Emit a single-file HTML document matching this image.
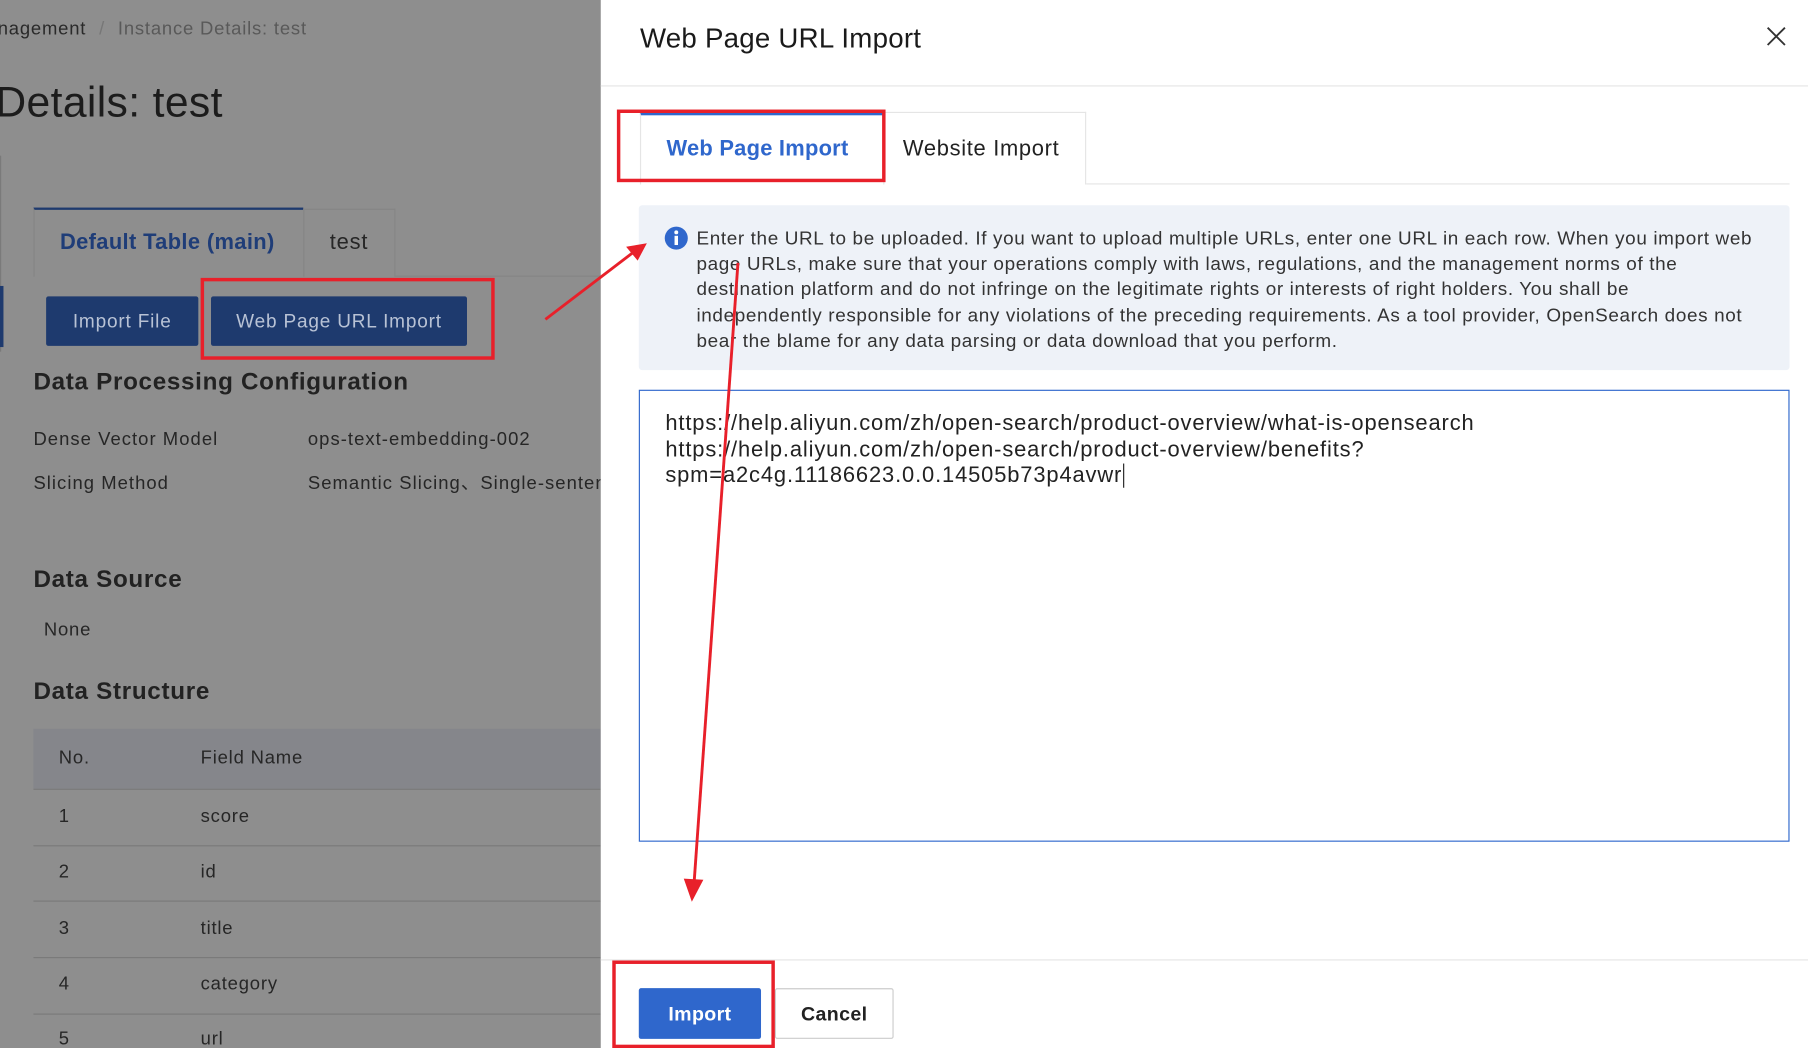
<!DOCTYPE html>
<html><head><meta charset="utf-8"><style>
*{margin:0;padding:0;box-sizing:border-box}
html,body{width:1808px;height:1048px;overflow:hidden;background:#8e8e8e}
#w{position:absolute;left:0;top:0;width:1568px;height:909px;transform:scale(1.15306);transform-origin:0 0;font-family:"Liberation Sans","Noto Sans CJK SC",sans-serif;letter-spacing:0.7px}
.a{position:absolute;white-space:nowrap}
#left{position:absolute;left:0;top:0;width:521px;height:909px;background:#8e8e8e;color:#262626;overflow:hidden}
#modal{position:absolute;left:521px;top:0;width:1047px;height:909px;background:#fff}
.h{font-weight:bold;font-size:21px;color:#222;letter-spacing:0.6px}
.row{position:absolute;left:29px;width:492px;height:1px;background:#7a7a7a}
</style></head><body><div id="w">
<div id="left">
<div class="a" style="left:-2px;top:17px;font-size:16px;color:#2a2a2a">nagement <span style="color:#777;margin:0 6px">/</span> <span style="color:#595959">Instance Details: test</span></div>
<div class="a" style="left:-4px;top:68px;font-size:37px;color:#1c1c1c;letter-spacing:0.3px">Details: test</div>
<div class="a" style="left:0;top:135px;width:1px;height:170px;background:#7a7a7a"></div>
<div class="a" style="left:0;top:248px;width:3px;height:53px;background:#1e3a6e"></div>
<div class="a" style="left:29px;top:180px;width:234px;height:60px;border-top:2px solid #1e3a6e;border-left:1px solid #858585"></div>
<div class="a" style="left:52px;top:200px;font-size:19px;color:#1f3d78;font-weight:bold;letter-spacing:0.3px">Default Table (main)</div>
<div class="a" style="left:263px;top:181px;width:80px;height:59px;border:1px solid #858585;border-bottom:none"></div>
<div class="a" style="left:286px;top:200px;font-size:19px;color:#262626">test</div>
<div class="a" style="left:343px;top:239px;width:178px;height:1px;background:#858585"></div>
<div class="a" style="left:40px;top:257px;width:132px;height:43px;background:#1e3a6e;border-radius:2px;color:#b8c2d5;font-size:16.5px;text-align:center;line-height:45px">Import File</div>
<div class="a" style="left:183px;top:257px;width:222px;height:43px;background:#1e3a6e;border-radius:2px;color:#b8c2d5;font-size:16.5px;text-align:center;line-height:45px">Web Page URL Import</div>
<div class="a" style="left:174px;top:241px;width:255px;height:71px;border:3px solid #e8202a"></div>
<div class="a h" style="left:29px;top:320px">Data Processing Configuration</div>
<div class="a" style="left:29px;top:373px;font-size:16px;letter-spacing:0.9px">Dense Vector Model</div>
<div class="a" style="left:267px;top:373px;font-size:16px;letter-spacing:0.9px">ops-text-embedding-002</div>
<div class="a" style="left:29px;top:411px;font-size:16px;letter-spacing:0.9px">Slicing Method</div>
<div class="a" style="left:267px;top:411px;font-size:16px;letter-spacing:0.9px;line-height:18px">Semantic Slicing、Single-sentence</div>
<div class="a h" style="left:29px;top:491px">Data Source</div>
<div class="a" style="left:38px;top:538px;font-size:16px">None</div>
<div class="a h" style="left:29px;top:588px">Data Structure</div>
<div class="a" style="left:29px;top:632px;width:492px;height:52px;background:#85868b"></div>
<div class="a" style="left:51px;top:649px;font-size:16px">No.</div>
<div class="a" style="left:174px;top:649px;font-size:16px">Field Name</div>
<div class="row" style="top:684px"></div><div class="row" style="top:733px"></div><div class="row" style="top:781px"></div><div class="row" style="top:830px"></div><div class="row" style="top:879px"></div>
<div class="a" style="left:51px;top:700px;font-size:16px">1</div><div class="a" style="left:174px;top:700px;font-size:16px">score</div>
<div class="a" style="left:51px;top:748px;font-size:16px">2</div><div class="a" style="left:174px;top:748px;font-size:16px">id</div>
<div class="a" style="left:51px;top:797px;font-size:16px">3</div><div class="a" style="left:174px;top:797px;font-size:16px">title</div>
<div class="a" style="left:51px;top:845px;font-size:16px">4</div><div class="a" style="left:174px;top:845px;font-size:16px">category</div>
<div class="a" style="left:51px;top:893px;font-size:16px">5</div><div class="a" style="left:174px;top:893px;font-size:16px">url</div>
</div>
<div id="modal">
<div class="a" style="left:34px;top:20px;font-size:24px;color:#1a1a1a;letter-spacing:0.2px">Web Page URL Import</div>
<svg class="a" style="left:1011px;top:23px" width="17" height="17"><path d="M1 1L16 16M16 1L1 16" stroke="#333" stroke-width="1.6"/></svg>
<div class="a" style="left:0;top:74px;width:1047px;height:1px;background:#e5e5e5"></div>
<div class="a" style="left:34px;top:97px;width:211px;height:63px;border-top:3px solid #2f67cc;border-left:1px solid #e5e5e5;background:#fff"></div>
<div class="a" style="left:57px;top:119px;font-size:19px;color:#2f67cc;font-weight:bold;letter-spacing:0.2px">Web Page Import</div>
<div class="a" style="left:245px;top:97px;width:176px;height:63px;border:1px solid #e5e5e5;border-bottom:none"></div>
<div class="a" style="left:262px;top:119px;font-size:19px;color:#222;letter-spacing:0.6px">Website Import</div>
<div class="a" style="left:421px;top:159px;width:610px;height:1px;background:#e5e5e5"></div>
<div class="a" style="left:14px;top:95px;width:233px;height:63px;border:3px solid #e8202a"></div>
<div class="a" style="left:33px;top:178px;width:998px;height:143px;background:#eef2f8;border-radius:3px"></div>
<svg class="a" style="left:55px;top:196px" width="21" height="21"><circle cx="10.5" cy="10.5" r="10" fill="#2f67cc"/><circle cx="10.5" cy="5.5" r="1.7" fill="#fff"/><rect x="9" y="8.5" width="3" height="8" fill="#fff"/></svg>
<div class="a" style="left:83px;top:196px;font-size:16.4px;line-height:22.2px;color:#333;letter-spacing:0.55px">Enter the URL to be uploaded. If you want to upload multiple URLs, enter one URL in each row. When you import web<br>page URLs, make sure that your operations comply with laws, regulations, and the management norms of the<br>destination platform and do not infringe on the legitimate rights or interests of right holders. You shall be<br>independently responsible for any violations of the preceding requirements. As a tool provider, OpenSearch does not<br>bear the blame for any data parsing or data download that you perform.</div>
<div class="a" style="left:33px;top:338px;width:998px;height:392px;border:1px solid #2f67cc"></div>
<div class="a" style="left:56px;top:357px;font-size:19px;line-height:22.6px;color:#222;letter-spacing:0.75px">https://help.aliyun.com/zh/open-search/product-overview/what-is-opensearch<br>https://help.aliyun.com/zh/open-search/product-overview/benefits?<br>spm=a2c4g.11186623.0.0.14505b73p4avwr<span style="border-left:1px solid #222;margin-left:1px"></span></div>
<div class="a" style="left:0;top:832px;width:1047px;height:1px;background:#e5e5e5"></div>
<div class="a" style="left:33px;top:857px;width:106px;height:44px;background:#2f67cc;border-radius:2px;color:#fff;font-weight:bold;font-size:17px;text-align:center;line-height:45px;letter-spacing:0.3px">Import</div>
<div class="a" style="left:151px;top:857px;width:103px;height:44px;border:1px solid #ccc;border-radius:2px;color:#222;font-weight:bold;font-size:17px;text-align:center;line-height:44px;letter-spacing:0.3px">Cancel</div>
<div class="a" style="left:10px;top:833px;width:141px;height:76px;border:3px solid #e8202a"></div>
</div>
<svg class="a" style="left:0;top:0" width="1568" height="909">
<path d="M473 277L549 219" stroke="#e8202a" stroke-width="2.5"/>
<path d="M561 211L543 214L553 226Z" fill="#e8202a"/>
<path d="M640 228L602 765" stroke="#e8202a" stroke-width="2.5"/>
<path d="M600 782L593 762L610 763Z" fill="#e8202a"/>
</svg>
</div></body></html>
